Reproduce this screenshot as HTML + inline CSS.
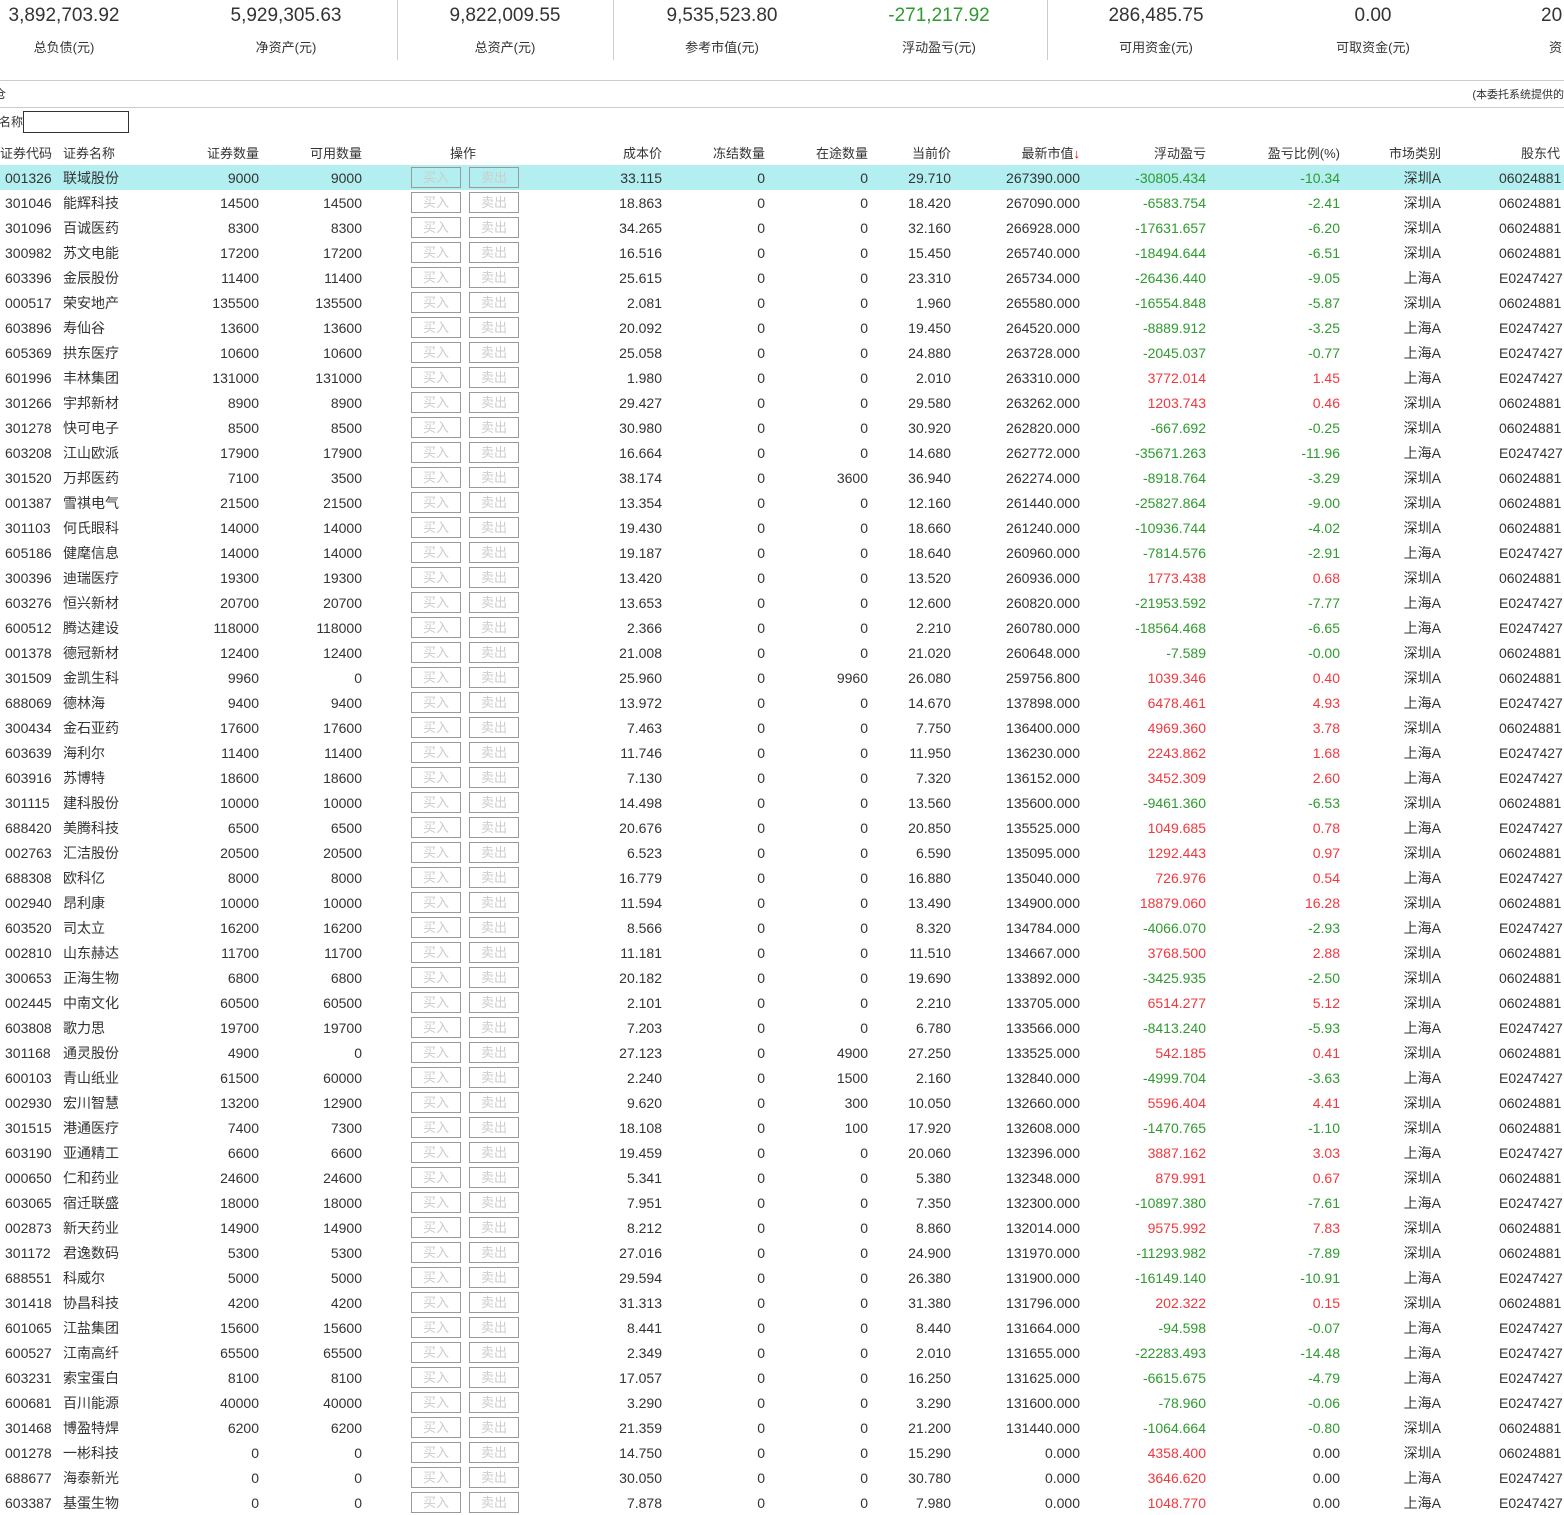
<!DOCTYPE html>
<html><head><meta charset="utf-8"><style>
*{margin:0;padding:0;box-sizing:border-box}
body{width:1564px;height:1513px;overflow:hidden;background:#fff;font-family:"Liberation Sans","Noto Sans CJK SC",sans-serif;color:#333;position:relative;font-size:14px}
.s{position:absolute;top:0;text-align:center;width:220px}
.s .v{position:absolute;top:5px;left:0;width:100%;font-size:19px;color:#333}
.s .l{position:absolute;top:37px;left:0;width:100%;font-size:13px}
.s .v.g{color:#2f9a2f}
.dv{position:absolute;top:0;width:1px;height:60px;background:#ccc}
.hl{position:absolute;left:0;width:1564px;height:1px;background:#ccc}
table{position:absolute;left:0;top:140px;border-collapse:collapse;table-layout:fixed;width:1564px}
td{height:25px;padding:0;white-space:nowrap;overflow:hidden;font-size:14px;text-align:right}
tr.h td{height:25px;font-size:13px}
td:nth-child(1){text-align:left;padding-left:5px}
td:nth-child(2){text-align:left;padding-left:5px}
td:nth-child(5){text-align:left;padding-left:49px}
td:nth-child(13){text-align:right}
td:nth-child(14){text-align:left;padding-left:58px}
b{display:inline-block;width:50px;height:21px;border:1px solid #999;color:#ccc;font-weight:normal;text-align:center;line-height:19px;font-size:13px;vertical-align:middle;margin-right:8px}
.g{color:#2f9a2f}.r{color:#f0383f}
tr.sel td{background:#b3eff0}
</style></head><body>
<div class="s" style="left:-46px"><div class="v">3,892,703.92</div><div class="l">总负债(元)</div></div>
<div class="s" style="left:176px"><div class="v">5,929,305.63</div><div class="l">净资产(元)</div></div>
<div class="dv" style="left:397px"></div>
<div class="s" style="left:395px"><div class="v">9,822,009.55</div><div class="l">总资产(元)</div></div>
<div class="dv" style="left:613px"></div>
<div class="s" style="left:612px"><div class="v">9,535,523.80</div><div class="l">参考市值(元)</div></div>
<div class="s" style="left:829px"><div class="v g">-271,217.92</div><div class="l">浮动盈亏(元)</div></div>
<div class="dv" style="left:1047px"></div>
<div class="s" style="left:1046px"><div class="v">286,485.75</div><div class="l">可用资金(元)</div></div>
<div class="s" style="left:1263px"><div class="v">0.00</div><div class="l">可取资金(元)</div></div>
<div style="position:absolute;left:1541px;top:5px;font-size:19px">20</div>
<div style="position:absolute;left:1549px;top:37px;font-size:13px">资</div>
<div class="hl" style="top:80px"></div>
<div style="position:absolute;left:-6px;top:85px;font-size:12px">仓</div>
<div style="position:absolute;right:0;top:86px;font-size:11px;white-space:nowrap">(本委托系统提供的</div>
<div class="hl" style="top:107px"></div>
<div style="position:absolute;left:-1px;top:113px;font-size:12px">名称</div>
<div style="position:absolute;left:23px;top:111px;width:106px;height:22px;border:1px solid #333"></div>
<table>
<colgroup><col style="width:58px"><col style="width:102px"><col style="width:99px"><col style="width:103px"><col style="width:203px"><col style="width:97px"><col style="width:103px"><col style="width:103px"><col style="width:83px"><col style="width:129px"><col style="width:126px"><col style="width:134px"><col style="width:101px"><col style="width:123px"></colgroup>
<tr class="h"><td style="padding-left:0">证券代码</td><td>证券名称</td><td>证券数量</td><td>可用数量</td><td style="padding-left:88px">操作</td><td>成本价</td><td>冻结数量</td><td>在途数量</td><td>当前价</td><td>最新市值<span style="color:#e00">↓</span></td><td>浮动盈亏</td><td>盈亏比例(%)</td><td>市场类别</td><td style="padding-left:80px">股东代</td></tr>
<tr class="sel"><td>001326</td><td>联域股份</td><td>9000</td><td>9000</td><td><b>买入</b><b>卖出</b></td><td>33.115</td><td>0</td><td>0</td><td>29.710</td><td>267390.000</td><td class="g">-30805.434</td><td class="g">-10.34</td><td>深圳A</td><td>06024881</td></tr>
<tr><td>301046</td><td>能辉科技</td><td>14500</td><td>14500</td><td><b>买入</b><b>卖出</b></td><td>18.863</td><td>0</td><td>0</td><td>18.420</td><td>267090.000</td><td class="g">-6583.754</td><td class="g">-2.41</td><td>深圳A</td><td>06024881</td></tr>
<tr><td>301096</td><td>百诚医药</td><td>8300</td><td>8300</td><td><b>买入</b><b>卖出</b></td><td>34.265</td><td>0</td><td>0</td><td>32.160</td><td>266928.000</td><td class="g">-17631.657</td><td class="g">-6.20</td><td>深圳A</td><td>06024881</td></tr>
<tr><td>300982</td><td>苏文电能</td><td>17200</td><td>17200</td><td><b>买入</b><b>卖出</b></td><td>16.516</td><td>0</td><td>0</td><td>15.450</td><td>265740.000</td><td class="g">-18494.644</td><td class="g">-6.51</td><td>深圳A</td><td>06024881</td></tr>
<tr><td>603396</td><td>金辰股份</td><td>11400</td><td>11400</td><td><b>买入</b><b>卖出</b></td><td>25.615</td><td>0</td><td>0</td><td>23.310</td><td>265734.000</td><td class="g">-26436.440</td><td class="g">-9.05</td><td>上海A</td><td>E0247427</td></tr>
<tr><td>000517</td><td>荣安地产</td><td>135500</td><td>135500</td><td><b>买入</b><b>卖出</b></td><td>2.081</td><td>0</td><td>0</td><td>1.960</td><td>265580.000</td><td class="g">-16554.848</td><td class="g">-5.87</td><td>深圳A</td><td>06024881</td></tr>
<tr><td>603896</td><td>寿仙谷</td><td>13600</td><td>13600</td><td><b>买入</b><b>卖出</b></td><td>20.092</td><td>0</td><td>0</td><td>19.450</td><td>264520.000</td><td class="g">-8889.912</td><td class="g">-3.25</td><td>上海A</td><td>E0247427</td></tr>
<tr><td>605369</td><td>拱东医疗</td><td>10600</td><td>10600</td><td><b>买入</b><b>卖出</b></td><td>25.058</td><td>0</td><td>0</td><td>24.880</td><td>263728.000</td><td class="g">-2045.037</td><td class="g">-0.77</td><td>上海A</td><td>E0247427</td></tr>
<tr><td>601996</td><td>丰林集团</td><td>131000</td><td>131000</td><td><b>买入</b><b>卖出</b></td><td>1.980</td><td>0</td><td>0</td><td>2.010</td><td>263310.000</td><td class="r">3772.014</td><td class="r">1.45</td><td>上海A</td><td>E0247427</td></tr>
<tr><td>301266</td><td>宇邦新材</td><td>8900</td><td>8900</td><td><b>买入</b><b>卖出</b></td><td>29.427</td><td>0</td><td>0</td><td>29.580</td><td>263262.000</td><td class="r">1203.743</td><td class="r">0.46</td><td>深圳A</td><td>06024881</td></tr>
<tr><td>301278</td><td>快可电子</td><td>8500</td><td>8500</td><td><b>买入</b><b>卖出</b></td><td>30.980</td><td>0</td><td>0</td><td>30.920</td><td>262820.000</td><td class="g">-667.692</td><td class="g">-0.25</td><td>深圳A</td><td>06024881</td></tr>
<tr><td>603208</td><td>江山欧派</td><td>17900</td><td>17900</td><td><b>买入</b><b>卖出</b></td><td>16.664</td><td>0</td><td>0</td><td>14.680</td><td>262772.000</td><td class="g">-35671.263</td><td class="g">-11.96</td><td>上海A</td><td>E0247427</td></tr>
<tr><td>301520</td><td>万邦医药</td><td>7100</td><td>3500</td><td><b>买入</b><b>卖出</b></td><td>38.174</td><td>0</td><td>3600</td><td>36.940</td><td>262274.000</td><td class="g">-8918.764</td><td class="g">-3.29</td><td>深圳A</td><td>06024881</td></tr>
<tr><td>001387</td><td>雪祺电气</td><td>21500</td><td>21500</td><td><b>买入</b><b>卖出</b></td><td>13.354</td><td>0</td><td>0</td><td>12.160</td><td>261440.000</td><td class="g">-25827.864</td><td class="g">-9.00</td><td>深圳A</td><td>06024881</td></tr>
<tr><td>301103</td><td>何氏眼科</td><td>14000</td><td>14000</td><td><b>买入</b><b>卖出</b></td><td>19.430</td><td>0</td><td>0</td><td>18.660</td><td>261240.000</td><td class="g">-10936.744</td><td class="g">-4.02</td><td>深圳A</td><td>06024881</td></tr>
<tr><td>605186</td><td>健麾信息</td><td>14000</td><td>14000</td><td><b>买入</b><b>卖出</b></td><td>19.187</td><td>0</td><td>0</td><td>18.640</td><td>260960.000</td><td class="g">-7814.576</td><td class="g">-2.91</td><td>上海A</td><td>E0247427</td></tr>
<tr><td>300396</td><td>迪瑞医疗</td><td>19300</td><td>19300</td><td><b>买入</b><b>卖出</b></td><td>13.420</td><td>0</td><td>0</td><td>13.520</td><td>260936.000</td><td class="r">1773.438</td><td class="r">0.68</td><td>深圳A</td><td>06024881</td></tr>
<tr><td>603276</td><td>恒兴新材</td><td>20700</td><td>20700</td><td><b>买入</b><b>卖出</b></td><td>13.653</td><td>0</td><td>0</td><td>12.600</td><td>260820.000</td><td class="g">-21953.592</td><td class="g">-7.77</td><td>上海A</td><td>E0247427</td></tr>
<tr><td>600512</td><td>腾达建设</td><td>118000</td><td>118000</td><td><b>买入</b><b>卖出</b></td><td>2.366</td><td>0</td><td>0</td><td>2.210</td><td>260780.000</td><td class="g">-18564.468</td><td class="g">-6.65</td><td>上海A</td><td>E0247427</td></tr>
<tr><td>001378</td><td>德冠新材</td><td>12400</td><td>12400</td><td><b>买入</b><b>卖出</b></td><td>21.008</td><td>0</td><td>0</td><td>21.020</td><td>260648.000</td><td class="g">-7.589</td><td class="g">-0.00</td><td>深圳A</td><td>06024881</td></tr>
<tr><td>301509</td><td>金凯生科</td><td>9960</td><td>0</td><td><b>买入</b><b>卖出</b></td><td>25.960</td><td>0</td><td>9960</td><td>26.080</td><td>259756.800</td><td class="r">1039.346</td><td class="r">0.40</td><td>深圳A</td><td>06024881</td></tr>
<tr><td>688069</td><td>德林海</td><td>9400</td><td>9400</td><td><b>买入</b><b>卖出</b></td><td>13.972</td><td>0</td><td>0</td><td>14.670</td><td>137898.000</td><td class="r">6478.461</td><td class="r">4.93</td><td>上海A</td><td>E0247427</td></tr>
<tr><td>300434</td><td>金石亚药</td><td>17600</td><td>17600</td><td><b>买入</b><b>卖出</b></td><td>7.463</td><td>0</td><td>0</td><td>7.750</td><td>136400.000</td><td class="r">4969.360</td><td class="r">3.78</td><td>深圳A</td><td>06024881</td></tr>
<tr><td>603639</td><td>海利尔</td><td>11400</td><td>11400</td><td><b>买入</b><b>卖出</b></td><td>11.746</td><td>0</td><td>0</td><td>11.950</td><td>136230.000</td><td class="r">2243.862</td><td class="r">1.68</td><td>上海A</td><td>E0247427</td></tr>
<tr><td>603916</td><td>苏博特</td><td>18600</td><td>18600</td><td><b>买入</b><b>卖出</b></td><td>7.130</td><td>0</td><td>0</td><td>7.320</td><td>136152.000</td><td class="r">3452.309</td><td class="r">2.60</td><td>上海A</td><td>E0247427</td></tr>
<tr><td>301115</td><td>建科股份</td><td>10000</td><td>10000</td><td><b>买入</b><b>卖出</b></td><td>14.498</td><td>0</td><td>0</td><td>13.560</td><td>135600.000</td><td class="g">-9461.360</td><td class="g">-6.53</td><td>深圳A</td><td>06024881</td></tr>
<tr><td>688420</td><td>美腾科技</td><td>6500</td><td>6500</td><td><b>买入</b><b>卖出</b></td><td>20.676</td><td>0</td><td>0</td><td>20.850</td><td>135525.000</td><td class="r">1049.685</td><td class="r">0.78</td><td>上海A</td><td>E0247427</td></tr>
<tr><td>002763</td><td>汇洁股份</td><td>20500</td><td>20500</td><td><b>买入</b><b>卖出</b></td><td>6.523</td><td>0</td><td>0</td><td>6.590</td><td>135095.000</td><td class="r">1292.443</td><td class="r">0.97</td><td>深圳A</td><td>06024881</td></tr>
<tr><td>688308</td><td>欧科亿</td><td>8000</td><td>8000</td><td><b>买入</b><b>卖出</b></td><td>16.779</td><td>0</td><td>0</td><td>16.880</td><td>135040.000</td><td class="r">726.976</td><td class="r">0.54</td><td>上海A</td><td>E0247427</td></tr>
<tr><td>002940</td><td>昂利康</td><td>10000</td><td>10000</td><td><b>买入</b><b>卖出</b></td><td>11.594</td><td>0</td><td>0</td><td>13.490</td><td>134900.000</td><td class="r">18879.060</td><td class="r">16.28</td><td>深圳A</td><td>06024881</td></tr>
<tr><td>603520</td><td>司太立</td><td>16200</td><td>16200</td><td><b>买入</b><b>卖出</b></td><td>8.566</td><td>0</td><td>0</td><td>8.320</td><td>134784.000</td><td class="g">-4066.070</td><td class="g">-2.93</td><td>上海A</td><td>E0247427</td></tr>
<tr><td>002810</td><td>山东赫达</td><td>11700</td><td>11700</td><td><b>买入</b><b>卖出</b></td><td>11.181</td><td>0</td><td>0</td><td>11.510</td><td>134667.000</td><td class="r">3768.500</td><td class="r">2.88</td><td>深圳A</td><td>06024881</td></tr>
<tr><td>300653</td><td>正海生物</td><td>6800</td><td>6800</td><td><b>买入</b><b>卖出</b></td><td>20.182</td><td>0</td><td>0</td><td>19.690</td><td>133892.000</td><td class="g">-3425.935</td><td class="g">-2.50</td><td>深圳A</td><td>06024881</td></tr>
<tr><td>002445</td><td>中南文化</td><td>60500</td><td>60500</td><td><b>买入</b><b>卖出</b></td><td>2.101</td><td>0</td><td>0</td><td>2.210</td><td>133705.000</td><td class="r">6514.277</td><td class="r">5.12</td><td>深圳A</td><td>06024881</td></tr>
<tr><td>603808</td><td>歌力思</td><td>19700</td><td>19700</td><td><b>买入</b><b>卖出</b></td><td>7.203</td><td>0</td><td>0</td><td>6.780</td><td>133566.000</td><td class="g">-8413.240</td><td class="g">-5.93</td><td>上海A</td><td>E0247427</td></tr>
<tr><td>301168</td><td>通灵股份</td><td>4900</td><td>0</td><td><b>买入</b><b>卖出</b></td><td>27.123</td><td>0</td><td>4900</td><td>27.250</td><td>133525.000</td><td class="r">542.185</td><td class="r">0.41</td><td>深圳A</td><td>06024881</td></tr>
<tr><td>600103</td><td>青山纸业</td><td>61500</td><td>60000</td><td><b>买入</b><b>卖出</b></td><td>2.240</td><td>0</td><td>1500</td><td>2.160</td><td>132840.000</td><td class="g">-4999.704</td><td class="g">-3.63</td><td>上海A</td><td>E0247427</td></tr>
<tr><td>002930</td><td>宏川智慧</td><td>13200</td><td>12900</td><td><b>买入</b><b>卖出</b></td><td>9.620</td><td>0</td><td>300</td><td>10.050</td><td>132660.000</td><td class="r">5596.404</td><td class="r">4.41</td><td>深圳A</td><td>06024881</td></tr>
<tr><td>301515</td><td>港通医疗</td><td>7400</td><td>7300</td><td><b>买入</b><b>卖出</b></td><td>18.108</td><td>0</td><td>100</td><td>17.920</td><td>132608.000</td><td class="g">-1470.765</td><td class="g">-1.10</td><td>深圳A</td><td>06024881</td></tr>
<tr><td>603190</td><td>亚通精工</td><td>6600</td><td>6600</td><td><b>买入</b><b>卖出</b></td><td>19.459</td><td>0</td><td>0</td><td>20.060</td><td>132396.000</td><td class="r">3887.162</td><td class="r">3.03</td><td>上海A</td><td>E0247427</td></tr>
<tr><td>000650</td><td>仁和药业</td><td>24600</td><td>24600</td><td><b>买入</b><b>卖出</b></td><td>5.341</td><td>0</td><td>0</td><td>5.380</td><td>132348.000</td><td class="r">879.991</td><td class="r">0.67</td><td>深圳A</td><td>06024881</td></tr>
<tr><td>603065</td><td>宿迁联盛</td><td>18000</td><td>18000</td><td><b>买入</b><b>卖出</b></td><td>7.951</td><td>0</td><td>0</td><td>7.350</td><td>132300.000</td><td class="g">-10897.380</td><td class="g">-7.61</td><td>上海A</td><td>E0247427</td></tr>
<tr><td>002873</td><td>新天药业</td><td>14900</td><td>14900</td><td><b>买入</b><b>卖出</b></td><td>8.212</td><td>0</td><td>0</td><td>8.860</td><td>132014.000</td><td class="r">9575.992</td><td class="r">7.83</td><td>深圳A</td><td>06024881</td></tr>
<tr><td>301172</td><td>君逸数码</td><td>5300</td><td>5300</td><td><b>买入</b><b>卖出</b></td><td>27.016</td><td>0</td><td>0</td><td>24.900</td><td>131970.000</td><td class="g">-11293.982</td><td class="g">-7.89</td><td>深圳A</td><td>06024881</td></tr>
<tr><td>688551</td><td>科威尔</td><td>5000</td><td>5000</td><td><b>买入</b><b>卖出</b></td><td>29.594</td><td>0</td><td>0</td><td>26.380</td><td>131900.000</td><td class="g">-16149.140</td><td class="g">-10.91</td><td>上海A</td><td>E0247427</td></tr>
<tr><td>301418</td><td>协昌科技</td><td>4200</td><td>4200</td><td><b>买入</b><b>卖出</b></td><td>31.313</td><td>0</td><td>0</td><td>31.380</td><td>131796.000</td><td class="r">202.322</td><td class="r">0.15</td><td>深圳A</td><td>06024881</td></tr>
<tr><td>601065</td><td>江盐集团</td><td>15600</td><td>15600</td><td><b>买入</b><b>卖出</b></td><td>8.441</td><td>0</td><td>0</td><td>8.440</td><td>131664.000</td><td class="g">-94.598</td><td class="g">-0.07</td><td>上海A</td><td>E0247427</td></tr>
<tr><td>600527</td><td>江南高纤</td><td>65500</td><td>65500</td><td><b>买入</b><b>卖出</b></td><td>2.349</td><td>0</td><td>0</td><td>2.010</td><td>131655.000</td><td class="g">-22283.493</td><td class="g">-14.48</td><td>上海A</td><td>E0247427</td></tr>
<tr><td>603231</td><td>索宝蛋白</td><td>8100</td><td>8100</td><td><b>买入</b><b>卖出</b></td><td>17.057</td><td>0</td><td>0</td><td>16.250</td><td>131625.000</td><td class="g">-6615.675</td><td class="g">-4.79</td><td>上海A</td><td>E0247427</td></tr>
<tr><td>600681</td><td>百川能源</td><td>40000</td><td>40000</td><td><b>买入</b><b>卖出</b></td><td>3.290</td><td>0</td><td>0</td><td>3.290</td><td>131600.000</td><td class="g">-78.960</td><td class="g">-0.06</td><td>上海A</td><td>E0247427</td></tr>
<tr><td>301468</td><td>博盈特焊</td><td>6200</td><td>6200</td><td><b>买入</b><b>卖出</b></td><td>21.359</td><td>0</td><td>0</td><td>21.200</td><td>131440.000</td><td class="g">-1064.664</td><td class="g">-0.80</td><td>深圳A</td><td>06024881</td></tr>
<tr><td>001278</td><td>一彬科技</td><td>0</td><td>0</td><td><b>买入</b><b>卖出</b></td><td>14.750</td><td>0</td><td>0</td><td>15.290</td><td>0.000</td><td class="r">4358.400</td><td>0.00</td><td>深圳A</td><td>06024881</td></tr>
<tr><td>688677</td><td>海泰新光</td><td>0</td><td>0</td><td><b>买入</b><b>卖出</b></td><td>30.050</td><td>0</td><td>0</td><td>30.780</td><td>0.000</td><td class="r">3646.620</td><td>0.00</td><td>上海A</td><td>E0247427</td></tr>
<tr><td>603387</td><td>基蛋生物</td><td>0</td><td>0</td><td><b>买入</b><b>卖出</b></td><td>7.878</td><td>0</td><td>0</td><td>7.980</td><td>0.000</td><td class="r">1048.770</td><td>0.00</td><td>上海A</td><td>E0247427</td></tr>
</table>
</body></html>
